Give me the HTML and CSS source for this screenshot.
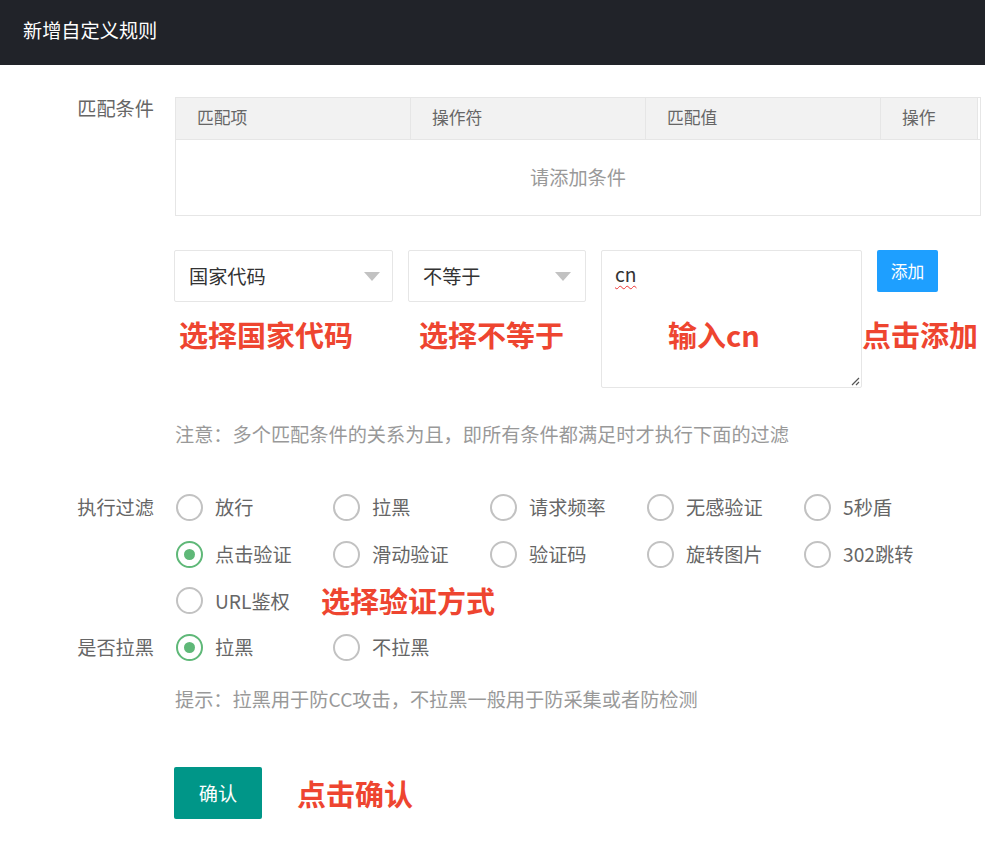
FILE: index.html
```html
<!DOCTYPE html>
<html lang="zh-CN">
<head>
<meta charset="utf-8">
<title>新增自定义规则</title>
<link rel="stylesheet" href="styles.css">
</head>
<body>
<header class="topbar">新增自定义规则</header>
<main class="form">
  <div class="row row-table">
    <div class="label">匹配条件</div>
    <div class="content">
      <div class="table">
        <div class="thead">
          <div class="th">匹配项</div>
          <div class="th">操作符</div>
          <div class="th">匹配值</div>
          <div class="th">操作</div>
          <div class="th th-gutter"></div>
        </div>
        <div class="tempty">请添加条件</div>
      </div>
    </div>
  </div>

  <div class="row row-inputs">
    <div class="label"></div>
    <div class="content inputs">
      <div class="col col-1">
        <div class="select"><span>国家代码</span><i class="caret"></i></div>
        <div class="mark mark-a">选择国家代码</div>
      </div>
      <div class="col col-2">
        <div class="select"><span>不等于</span><i class="caret"></i></div>
        <div class="mark mark-b">选择不等于</div>
      </div>
      <div class="ta-wrap">
        <div class="textarea"><span class="typo">cn</span></div>
        <svg class="grip" width="10" height="10" viewBox="0 0 10 10"><path d="M9 2 L2 9 M9 6 L6 9" stroke="#555" stroke-width="1.2" fill="none"/></svg>
        <div class="mark mark-over">输入cn</div>
      </div>
      <div class="btn-wrap">
        <button class="btn-add">添加</button>
        <div class="mark mark-add">点击添加</div>
      </div>
    </div>
  </div>

  <div class="row row-note">
    <div class="label"></div>
    <div class="content note">注意：多个匹配条件的关系为且，即所有条件都满足时才执行下面的过滤</div>
  </div>

  <div class="row row-filter">
    <div class="label label-radio">执行过滤</div>
    <div class="content radios">
      <div class="opt"><i class="radio"></i><span>放行</span></div>
      <div class="opt"><i class="radio"></i><span>拉黑</span></div>
      <div class="opt"><i class="radio"></i><span>请求频率</span></div>
      <div class="opt"><i class="radio"></i><span>无感验证</span></div>
      <div class="opt"><i class="radio"></i><span>5秒盾</span></div>
      <div class="opt"><i class="radio checked"></i><span>点击验证</span></div>
      <div class="opt"><i class="radio"></i><span>滑动验证</span></div>
      <div class="opt"><i class="radio"></i><span>验证码</span></div>
      <div class="opt"><i class="radio"></i><span>旋转图片</span></div>
      <div class="opt"><i class="radio"></i><span>302跳转</span></div>
      <div class="opt"><i class="radio"></i><span>URL鉴权</span></div>
      <div class="mark mark-way">选择验证方式</div>
    </div>
  </div>

  <div class="row row-black">
    <div class="label label-radio">是否拉黑</div>
    <div class="content radios">
      <div class="opt"><i class="radio checked"></i><span>拉黑</span></div>
      <div class="opt"><i class="radio"></i><span>不拉黑</span></div>
    </div>
  </div>

  <div class="row row-tip">
    <div class="label"></div>
    <div class="content note">提示：拉黑用于防CC攻击，不拉黑一般用于防采集或者防检测</div>
  </div>

  <div class="row row-submit">
    <div class="label"></div>
    <div class="content submit">
      <button class="btn-ok">确认</button>
      <div class="mark mark-ok">点击确认</div>
    </div>
  </div>
</main>
</body>
</html>
```

FILE: styles.css
```css
* { box-sizing: border-box; }
html, body { margin: 0; padding: 0; background: #fff; }
body {
  font-family: "Noto Sans CJK SC", "Microsoft YaHei", "Liberation Sans", sans-serif;
  font-size: 19.2px;
  color: #666;
}
.topbar {
  height: 65px;
  background: #212329;
  color: #fff;
  font-size: 19.2px;
  line-height: 61px;
  padding: 0 0 4px 23px;
}
.form { padding-top: 32px; }
.row { display: flex; align-items: flex-start; }
.label {
  width: 154px;
  margin-right: 21px;
  text-align: right;
  flex: none;
  line-height: 22px;
  color: #666;
}
.content { flex: none; }

/* table */
.table {
  width: 806px;
  border: 1px solid #e6e6e6;
}
.thead {
  display: grid;
  grid-template-columns: 235px 235px 235px 97px 1fr;
  background: #f2f2f2;
  height: 42px;
  border-bottom: 1px solid #e6e6e6;
}
.th {
  font-size: 16.8px;
  color: #666;
  line-height: 38px;
  padding-left: 21px;
  border-right: 1px solid #e6e6e6;
}
.th-gutter { background: #fff; border-right: none; padding: 0; }
.tempty {
  height: 75px;
  line-height: 74px;
  text-align: center;
  color: #999;
}

/* inputs row */
.row-inputs { margin-top: 34px; }
.inputs { display: flex; gap: 15px; align-items: flex-start; margin-left: -1px; }
.col { display: flex; flex-direction: column; }
.col-1 { width: 219px; }
.col-2 { width: 178px; }
.select {
  height: 52px;
  border: 1px solid #e6e6e6;
  border-radius: 2px;
  background: #fff;
  display: flex;
  align-items: center;
  justify-content: space-between;
  padding: 0 12px 0 14px;
  color: #333;
}
.col-2 .select { padding-left: 14px; padding-right: 14px; }
.caret {
  width: 0; height: 0;
  border-left: 8px solid transparent;
  border-right: 8px solid transparent;
  border-top: 9px solid #c2c2c2;
  margin-top: 1px;
}
.mark {
  color: #ee4530;
  font-weight: 700;
  font-size: 29px;
  line-height: 40px;
  white-space: nowrap;
}
.mark-a { margin-top: 12px; padding-left: 5px; }
.mark-b { margin-top: 12px; padding-left: 11px; }
.ta-wrap { position: relative; width: 261px; height: 138px; }
.textarea {
  width: 100%; height: 100%;
  border: 1px solid #e6e6e6;
  border-radius: 2px;
  padding: 10px 13px;
  color: #333;
  line-height: 26px;
}
.typo {
  text-decoration: underline wavy #e33;
  text-decoration-thickness: 1px;
  text-underline-offset: 3px;
}
.grip { position: absolute; right: 2px; bottom: 2px; }
.mark-over { position: absolute; left: 67px; top: 64px; }
.btn-wrap { position: relative; }
.btn-add {
  width: 61px; height: 42px;
  border: none;
  border-radius: 2px;
  background: #1e9fff;
  color: #fff;
  font-family: inherit;
  font-size: 16.8px;
  padding: 0;
  cursor: pointer;
}
.mark-add { position: absolute; left: -15px; top: 64px; }

/* note */
.row-note { margin-top: 34px; }
.note { color: #999; line-height: 24px; }

/* radios */
.row-filter { margin-top: 38px; }
.label-radio { line-height: 46.7px; }
.radios { display: flex; flex-wrap: wrap; width: 785px; }
.opt {
  width: 157px;
  height: 46.7px;
  display: flex;
  align-items: center;
  color: #666;
  padding-left: 1px;
}
.radio {
  width: 27px; height: 27px;
  border: 2px solid #c2c2c2;
  border-radius: 50%;
  flex: none;
  display: flex;
  align-items: center;
  justify-content: center;
  margin-right: 12px;
}
.radio.checked { border-color: #5fb878; }
.radio.checked::after {
  content: "";
  width: 11px; height: 11px;
  border-radius: 50%;
  background: #5fb878;
}
.mark-way { line-height: 46.7px; margin-left: -11px; }

.row-tip { margin-top: 16px; }

.row-submit { margin-top: 56px; }
.submit { display: flex; align-items: center; }
.btn-ok {
  width: 88px; height: 52px;
  border: none;
  border-radius: 2px;
  background: #009688;
  color: #fff;
  font-family: inherit;
  font-size: 19.2px;
  padding: 0;
  margin-left: -1px;
}
.mark-ok { margin-left: 35px; }
```
